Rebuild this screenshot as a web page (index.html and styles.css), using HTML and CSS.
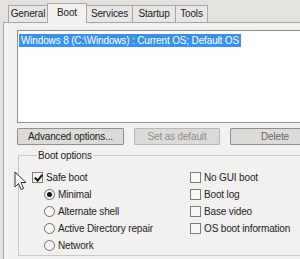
FILE: index.html
```html
<!DOCTYPE html>
<html lang="en">
<head>
  <meta charset="UTF-8" />
  <title>System Configuration - Boot</title>
  <link rel="stylesheet" href="styles.css">
</head>
<body>
  <div class="tabs">
    <div class="tab t-general">General</div>
    <div class="tab t-boot active">Boot</div>
    <div class="tab t-services">Services</div>
    <div class="tab t-startup">Startup</div>
    <div class="tab t-tools">Tools</div>
  </div>

  <div class="panel">
    <div class="listbox">
      <div class="item selected">Windows 8 (C:\Windows) : Current OS; Default OS</div>
    </div>

    <div class="buttons">
      <button class="btn btn-adv">Advanced options...</button>
      <button class="btn btn-def" disabled>Set as default</button>
      <button class="btn btn-del">Delete</button>
    </div>

    <fieldset class="group">
      <legend>Boot options</legend>
      <div class="cols">
        <div class="col">
          <label class="opt"><span class="check on"></span>Safe boot</label>
          <label class="opt sub"><span class="radio on"></span>Minimal</label>
          <label class="opt sub"><span class="radio"></span>Alternate shell</label>
          <label class="opt sub"><span class="radio"></span>Active Directory repair</label>
          <label class="opt sub"><span class="radio"></span>Network</label>
        </div>
        <div class="col">
          <label class="opt"><span class="check"></span>No GUI boot</label>
          <label class="opt"><span class="check"></span>Boot log</label>
          <label class="opt"><span class="check"></span>Base video</label>
          <label class="opt"><span class="check"></span>OS boot information</label>
        </div>
      </div>
    </fieldset>
  </div>

  <!-- mouse pointer sitting over the dialog -->
  <svg class="cursor" width="13" height="20" viewBox="0 0 13 20">
    <path d="M1 1 L1 16 L4.5 12.5 L7 18.5 L9.5 17.5 L7 11.5 L12 11.5 Z" fill="#fff" stroke="#333" stroke-width="1" stroke-linejoin="round"/>
  </svg>
</body>
</html>
```

FILE: styles.css
```css
body {
  margin: 0; background: #e4e2df;
  font-family: "Liberation Sans", Arial, sans-serif; font-size: 10px; letter-spacing: -0.15px; color: #222;
  width: 300px; height: 259px; overflow: hidden; position: relative;
}

.tabs { display: flex; align-items: flex-end; height: 22px; padding-left: 8px; }
.tab {
  height: 16px; line-height: 16px; text-align: center; margin-right: -1px;
  border: 1px solid #a8a7a5; border-bottom: none; background: #e8e7e5;
}
.t-general { width: 38px; }
.t-boot { width: 38px; }
.t-services { width: 45px; }
.t-startup { width: 42px; }
.t-tools { width: 31px; }
.tab.active {
  height: 19px; line-height: 17px; margin-bottom: -1px;
  background: #f2f1ef; position: relative; z-index: 1;
}

.panel {
  margin-left: 3px; width: 320px; height: 240px; overflow: hidden;
  border: 1px solid #a8a7a5; background: #f2f1ef;
  padding: 7px 0 0 13px; box-sizing: border-box;
}

.listbox {
  height: 93px; box-sizing: border-box;
  border: 1px solid #8e8d8b; background: #fff; padding: 3px 0 0 1px;
}
.item.selected {
  display: inline-block; background: #3592f0; color: #fff;
  padding: 0 2px; height: 13px; line-height: 13px;
}

.buttons { display: flex; gap: 10px; margin-top: 5px; }
.btn {
  font: inherit; letter-spacing: inherit; height: 17px; padding: 0; color: #222;
  border: 1px solid #8f8e8c; background: #dddbd8; border-radius: 1px;
}
.btn-adv { width: 107px; }
.btn-def { width: 86px; color: #8d8c8a; border-color: #b7b6b4; }
.btn-del { width: 90px; color: #6a6967; }

.group {
  margin: 5px 0 0 1px; padding: 10px 0 0 13px; height: 106px; box-sizing: border-box;
  border: 1px solid #c9c8c6; border-right: none;
}
.group legend { padding: 0 1px; margin-left: 5px; }

.cols { display: grid; grid-template-columns: 158px auto; }
.col { display: flex; flex-direction: column; gap: 4px; }

.opt { display: flex; align-items: center; height: 13px; gap: 3px; white-space: nowrap; }
.opt.sub { padding-left: 12px; }

.check {
  width: 11px; height: 11px; box-sizing: border-box;
  border: 1px solid #7d7c7a; background: #f7f7f6; position: relative;
}
.check.on::after {
  content: ""; position: absolute; left: 3px; top: 0px; width: 3px; height: 6px;
  border: solid #111; border-width: 0 2px 2px 0; transform: rotate(40deg);
}
.radio {
  width: 11px; height: 11px; box-sizing: border-box; border-radius: 50%;
  border: 1px solid #6e6d6b; background: #f7f7f6; position: relative;
}
.radio.on::after {
  content: ""; position: absolute; left: 2px; top: 2px; width: 5px; height: 5px;
  border-radius: 50%; background: #111;
}

.cursor { position: absolute; left: 14px; top: 171px; }
```
